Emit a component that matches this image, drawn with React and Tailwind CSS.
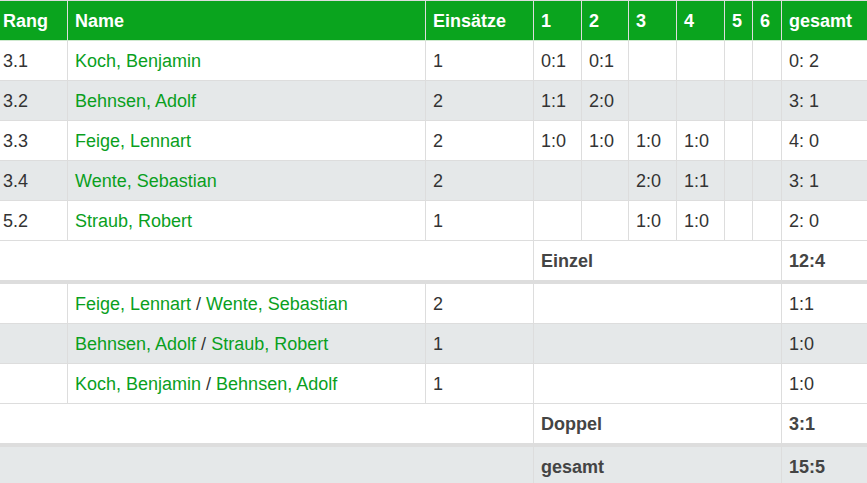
import React from 'react';

const singles = [
  { rang: '3.1', name: 'Koch, Benjamin', eins: '1', s: ['0:1', '0:1', '', '', '', ''], total: '0: 2' },
  { rang: '3.2', name: 'Behnsen, Adolf', eins: '2', s: ['1:1', '2:0', '', '', '', ''], total: '3: 1' },
  { rang: '3.3', name: 'Feige, Lennart', eins: '2', s: ['1:0', '1:0', '1:0', '1:0', '', ''], total: '4: 0' },
  { rang: '3.4', name: 'Wente, Sebastian', eins: '2', s: ['', '', '2:0', '1:1', '', ''], total: '3: 1' },
  { rang: '5.2', name: 'Straub, Robert', eins: '1', s: ['', '', '1:0', '1:0', '', ''], total: '2: 0' },
];

const doubles = [
  { a: 'Feige, Lennart', b: 'Wente, Sebastian', eins: '2', total: '1:1' },
  { a: 'Behnsen, Adolf', b: 'Straub, Robert', eins: '1', total: '1:0' },
  { a: 'Koch, Benjamin', b: 'Behnsen, Adolf', eins: '1', total: '1:0' },
];

const thBase = 'text-left font-bold pr-2 pt-[9px] pb-[7px] leading-[23px] border-r border-[#dddddd] border-b border-b-[#cfe9cf] border-t border-t-[#dddddd]';
const th = `${thBase} pl-[7px]`;
const tdBase = 'pr-2 pt-[9px] pb-[7px] leading-[23px] border-r border-b border-[#dddddd]';
const td = `${tdBase} pl-[7px]`;
const first = `${tdBase} pl-[3px]`;
const link = 'text-[#0a9f1e]';
const sep = 'border-b-[4px]';

export default function App() {
  return (
    <div className="w-[867px] h-[483px] overflow-hidden bg-white text-[18px] text-[#333333]" style={{ fontFamily: '"Liberation Sans", Arial, sans-serif' }}>
      <table className="table-fixed w-[882px] border-separate border-spacing-0">
        <thead>
          <tr className="bg-[#0aa41e] text-white">
            <th className={`${thBase} pl-[3px] w-[68px]`}>Rang</th>
            <th className={`${th} w-[358px]`}>Name</th>
            <th className={`${th} w-[108px]`}>Einsätze</th>
            <th className={`${th} w-[48px]`}>1</th>
            <th className={`${th} w-[47px]`}>2</th>
            <th className={`${th} w-[48px]`}>3</th>
            <th className={`${th} w-[48px]`}>4</th>
            <th className={`${th} w-[28px]`}>5</th>
            <th className={`${th} w-[29px]`}>6</th>
            <th className={`${th} w-[100px] border-r-0`}>gesamt</th>
          </tr>
        </thead>
        <tbody>
          {singles.map((r, i) => (
            <tr key={r.rang} className={i % 2 ? 'bg-[#e5e8e9]' : 'bg-white'}>
              <td className={first}>{r.rang}</td>
              <td className={`${td} ${link}`}>{r.name}</td>
              <td className={td}>{r.eins}</td>
              {r.s.map((v, j) => (
                <td key={j} className={td}>{v}</td>
              ))}
              <td className={`${td} border-r-0`}>{r.total}</td>
            </tr>
          ))}
          <tr className="bg-white">
            <td colSpan={3} className={`${first} ${sep}`}></td>
            <td colSpan={6} className={`${td} ${sep} font-bold text-[#444444]`}>Einzel</td>
            <td className={`${td} ${sep} border-r-0 font-bold text-[#444444]`}>12:4</td>
          </tr>
          {doubles.map((r, i) => (
            <tr key={i} className={i % 2 ? 'bg-[#e5e8e9]' : 'bg-white'}>
              <td className={first}></td>
              <td className={td}>
                <span className={link}>{r.a}</span> / <span className={link}>{r.b}</span>
              </td>
              <td className={td}>{r.eins}</td>
              <td colSpan={6} className={td}></td>
              <td className={`${td} border-r-0`}>{r.total}</td>
            </tr>
          ))}
          <tr className="bg-white">
            <td colSpan={3} className={`${first} ${sep}`}></td>
            <td colSpan={6} className={`${td} ${sep} font-bold text-[#444444]`}>Doppel</td>
            <td className={`${td} ${sep} border-r-0 font-bold text-[#444444]`}>3:1</td>
          </tr>
          <tr className="bg-[#e5e8e9]">
            <td colSpan={3} className={first}></td>
            <td colSpan={6} className={`${td} font-bold text-[#444444]`}>gesamt</td>
            <td className={`${td} border-r-0 font-bold text-[#444444]`}>15:5</td>
          </tr>
        </tbody>
      </table>
    </div>
  );
}
